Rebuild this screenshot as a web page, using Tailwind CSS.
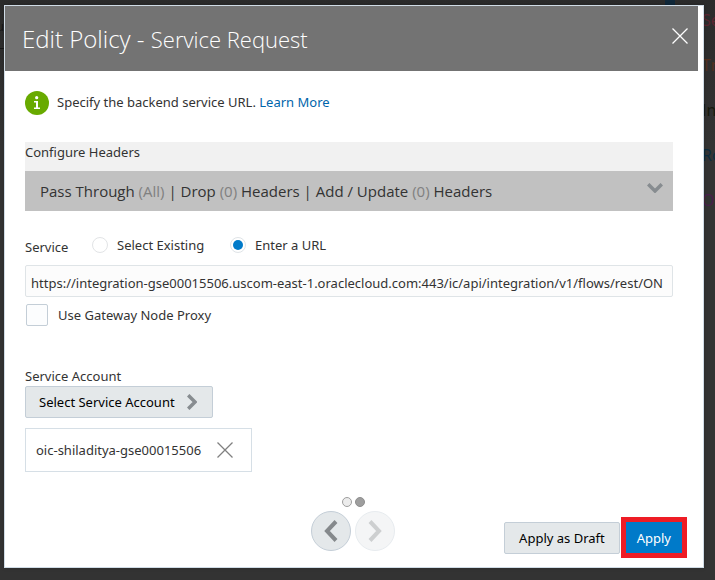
<!DOCTYPE html>
<html lang="en">
<head>
<meta charset="utf-8">
<meta name="viewport" content="width=device-width, initial-scale=1">
<title>Edit Policy - Service Request</title>
<script src="https://cdn.jsdelivr.net/npm/@tailwindcss/browser@4"></script>
</head>
<body class="relative flex min-h-screen flex-col overflow-x-hidden bg-[#333333] pt-[5px] pr-[11px] pb-3 pl-1 font-['Noto_Sans','Open_Sans',sans-serif] text-[13px] leading-5 text-[#333333]">

<!-- Dimmed page behind the dialog -->
<div aria-hidden="true" class="absolute inset-0 overflow-hidden bg-linear-to-b from-[#2b2b2b] to-[#333333] to-25%">
  <span class="absolute top-4 -left-1 text-[#171717]">u</span>
  <span class="absolute top-12 left-0 h-px w-4 bg-[#171717]"></span>
  <span class="absolute top-0 right-[40px] h-[5px] w-[10px] bg-[#10283a]"></span>
  <ul class="absolute top-2 left-[calc(100%-13px)] flex flex-col gap-[21px] font-['Open_Sans',sans-serif] text-base leading-6">
    <li class="text-[#5c2430]">Se</li>
    <li class="text-[#54301f]">Tr</li>
    <li class="text-[#16190c]">In</li>
    <li class="text-[#0c2c40]">Ro</li>
    <li class="text-[#4a1e4c]">O</li>
  </ul>
</div>

<section role="dialog" aria-labelledby="title" class="relative flex flex-1 flex-col border border-[#d0dce6] bg-white shadow-[0_0_4px_rgba(0,0,0,0.2)]">
  <header class="mr-[5px] flex h-[65px] items-center justify-between bg-[#737373] pr-[10px] pl-[17px] text-white">
    <h1 id="title" class="font-['Open_Sans',sans-serif] text-2xl font-light">Edit Policy - <span class="text-[22px]">Service Request</span></h1>
    <button type="button" aria-label="Close" class="-mt-[6px]">
      <svg class="size-4" viewBox="0 0 16 16" fill="none" stroke="currentColor" stroke-width="1.3"><path d="M.5.5l15 15M15.5.5l-15 15"/></svg>
    </button>
  </header>

  <div class="flex flex-1 flex-col pt-5 pr-[30px] pl-5">
    <p class="flex items-center">
      <svg class="mr-2 size-6" viewBox="0 0 24 24"><circle cx="12" cy="12" r="12" fill="#68aa00"/><circle cx="11.7" cy="6.7" r="1.6" fill="#fff"/><path d="M9 10h4v6.500h2V18H9v-1.500h2V11.500H9z" fill="#fff"/></svg>
      <span class="pb-[2px]">Specify the backend service URL. <a href="#" class="text-[#0065ab]">Learn More</a></span>
    </p>

    <section class="mt-[27px] bg-[#f1f1f1]">
      <h2 class="h-[29px]">Configure Headers</h2>
      <button type="button" class="flex h-10 w-full items-center justify-between bg-[#c1c1c1] pr-[10px] pl-[15px] text-left font-['Open_Sans',sans-serif] text-[15px]">
        <span>Pass Through <span class="text-[#808080]">(All)</span> | Drop <span class="text-[#808080]">(0)</span> Headers | Add / Update <span class="text-[#808080]">(0)</span> Headers</span>
        <svg class="mb-[6px] h-[10px] w-4" viewBox="0 0 16 10" fill="none" stroke="#878c90" stroke-width="3.500"><path d="M1.200 1.200L8 8l6.800-6.800"/></svg>
      </button>
    </section>

    <fieldset class="mt-[22px] flex items-center">
      <legend class="float-left mt-1 w-[67px]">Service</legend>
      <label class="flex w-[138px] items-center gap-[9px]"><input type="radio" name="service" class="size-4 appearance-none rounded-full border border-[#e2e4e6] bg-white bg-clip-content p-[2px] checked:bg-[#007ac9]">Select Existing</label>
      <label class="flex items-center gap-[9px]"><input type="radio" name="service" checked class="size-4 appearance-none rounded-full border border-[#dfe4e7] bg-white bg-clip-content p-[2px] checked:bg-[#007ac9]">Enter a URL</label>
    </fieldset>
    <input type="text" aria-label="Service URL" value="https://integration-gse00015506.uscom-east-1.oraclecloud.com:443/ic/api/integration/v1/flows/rest/ON" class="mt-2 h-8 w-full rounded-xs border border-[#dfe4e7] bg-[#fcfcfc] px-[5px] pt-1">
    <label class="mt-[7px] ml-px flex items-center gap-[10px]"><input type="checkbox" class="size-[22px] appearance-none rounded-xs border border-[#c4ced7] bg-[#fcfdfe] checked:bg-[#007ac9]">Use Gateway Node Proxy</label>

    <h2 class="mt-10">Service Account</h2>
    <button type="button" class="flex h-8 items-center gap-3 self-start rounded-xs border border-[#c4ced7] bg-[#e4e8ea] pr-[15px] pl-[13px] text-black">
      Select Service Account
      <svg class="h-4 w-[10px]" viewBox="0 0 10 16" fill="none" stroke="#878c90" stroke-width="3.500"><path d="M1.200 1.200L8 8l-6.800 6.800"/></svg>
    </button>
    <div class="mt-[10px] flex h-11 items-center gap-4 self-start border border-[#d6dfe6] pr-[18px] pl-[10px]">
      oic-shiladitya-gse00015506
      <button type="button" aria-label="Remove account"><svg class="size-4" viewBox="0 0 16 16" fill="none" stroke="#808080" stroke-width="1.3"><path d="M.5.5l15 15M15.5.5l-15 15"/></svg></button>
    </div>
  </div>

  <footer class="grid grid-cols-[1fr_auto_1fr] items-end pr-4 pb-[9px] pl-[14px]">
    <nav aria-label="Steps" class="col-start-2 mb-[7px] flex flex-col items-center gap-1">
      <div class="flex gap-[3px]">
        <span class="size-[10px] rounded-full border border-[#9e9e9e] bg-[#ececec]"></span>
        <span class="size-[10px] rounded-full border border-[#8e8e8e] bg-[#9e9e9e]"></span>
      </div>
      <div class="flex gap-1">
        <button type="button" aria-label="Previous" class="flex size-10 items-center justify-center rounded-full border border-[#c4ced7] bg-[#e4e8ea]">
          <svg class="h-[22px] w-[14px]" viewBox="0 0 14 22" fill="none" stroke="#85898c" stroke-width="4"><path d="M12 1.500L3 11l9 9.500"/></svg>
        </button>
        <button type="button" aria-label="Next" disabled class="flex size-10 items-center justify-center rounded-full border border-[#c4ced7] bg-[#e4e8ea] opacity-40">
          <svg class="h-[22px] w-[14px]" viewBox="0 0 14 22" fill="none" stroke="#85898c" stroke-width="4"><path d="M2 1.500L11 11l-9 9.500"/></svg>
        </button>
      </div>
    </nav>
    <div class="flex items-center justify-end">
      <button type="button" class="mr-px h-8 rounded-xs border border-[#c4ced7] bg-[#e4e8ea] px-[14px] text-black">Apply as Draft</button>
      <button type="button" class="h-[41px] border-5 border-[#ee1c25] bg-[#007ac9] px-[11px] text-white">Apply</button>
    </div>
  </footer>
</section>
</body>
</html>
